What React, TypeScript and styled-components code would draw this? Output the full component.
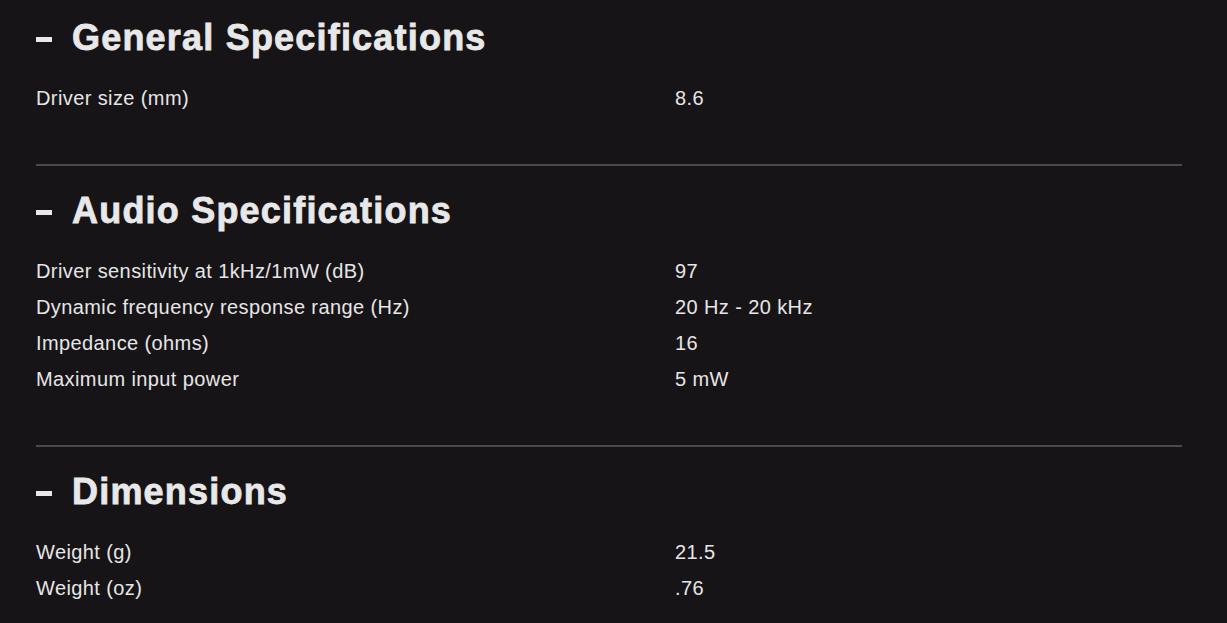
import styled, { createGlobalStyle } from "styled-components";

const GlobalStyle = createGlobalStyle`
    html, body {
        margin: 0;
        padding: 0;
        background: #161417;
    }
    body {
        font-family: "Liberation Sans", Arial, sans-serif;
        color: #e6e6e6;
    }
`;

type Spec = { label: string, value: string };
type Group = { title: string, specs: Spec[] };

const groups: Group[] = [
    {
        title: "General Specifications",
        specs: [{label: "Driver size (mm)", value: "8.6"}],
    },
    {
        title: "Audio Specifications",
        specs: [
            {label: "Driver sensitivity at 1kHz/1mW (dB)", value: "97"},
            {label: "Dynamic frequency response range (Hz)", value: "20 Hz - 20 kHz"},
            {label: "Impedance (ohms)", value: "16"},
            {label: "Maximum input power", value: "5 mW"},
        ],
    },
    {
        title: "Dimensions",
        specs: [
            {label: "Weight (g)", value: "21.5"},
            {label: "Weight (oz)", value: ".76"},
        ],
    },
];

export default function App() {
    return (
        <StyledPage>
            <GlobalStyle />
            {groups.map((group, i) => (
                <StyledSection key={group.title} $first={i === 0}>
                    <StyledHeading>
                        <StyledDash />
                        {group.title}
                    </StyledHeading>
                    <StyledList>
                        {group.specs.map(spec => (
                            <StyledRow key={spec.label}>
                                <div>{spec.label}</div>
                                <div>{spec.value}</div>
                            </StyledRow>
                        ))}
                    </StyledList>
                </StyledSection>
            ))}
        </StyledPage>
    )
};

const StyledPage = styled.div`
    padding: 0 45px 0 36px;
    width: 1146px;
`;

const StyledSection = styled.section<{ $first: boolean }>`
    border-top: ${props => props.$first ? "none" : "2px solid #4a4a4b"};
    padding-top: ${props => props.$first ? "18px" : "25px"};
    padding-bottom: 48px;
    &:last-child {
        padding-bottom: 10px;
    }
`;

const StyledHeading = styled.h2`
    margin: 0;
    display: flex;
    align-items: center;
    gap: 20px;
    font-family: "Liberation Sans", Arial, sans-serif;
    font-weight: 700;
    font-size: 36px;
    line-height: 40px;
    letter-spacing: 1.2px;
    -webkit-text-stroke: 0.8px #e8e8e8;
    color: #e8e8e8;
`;

const StyledDash = styled.span`
    width: 16px;
    height: 5px;
    margin-top: 2px;
    background: #e8e8e8;
`;

const StyledList = styled.div`
    margin-top: 22px;
    display: flex;
    flex-direction: column;
`;

const StyledRow = styled.div`
    display: grid;
    grid-template-columns: 639px 1fr;
    font-size: 20px;
    line-height: 36px;
    letter-spacing: 0.4px;
    color: #e6e6e6;
`;
